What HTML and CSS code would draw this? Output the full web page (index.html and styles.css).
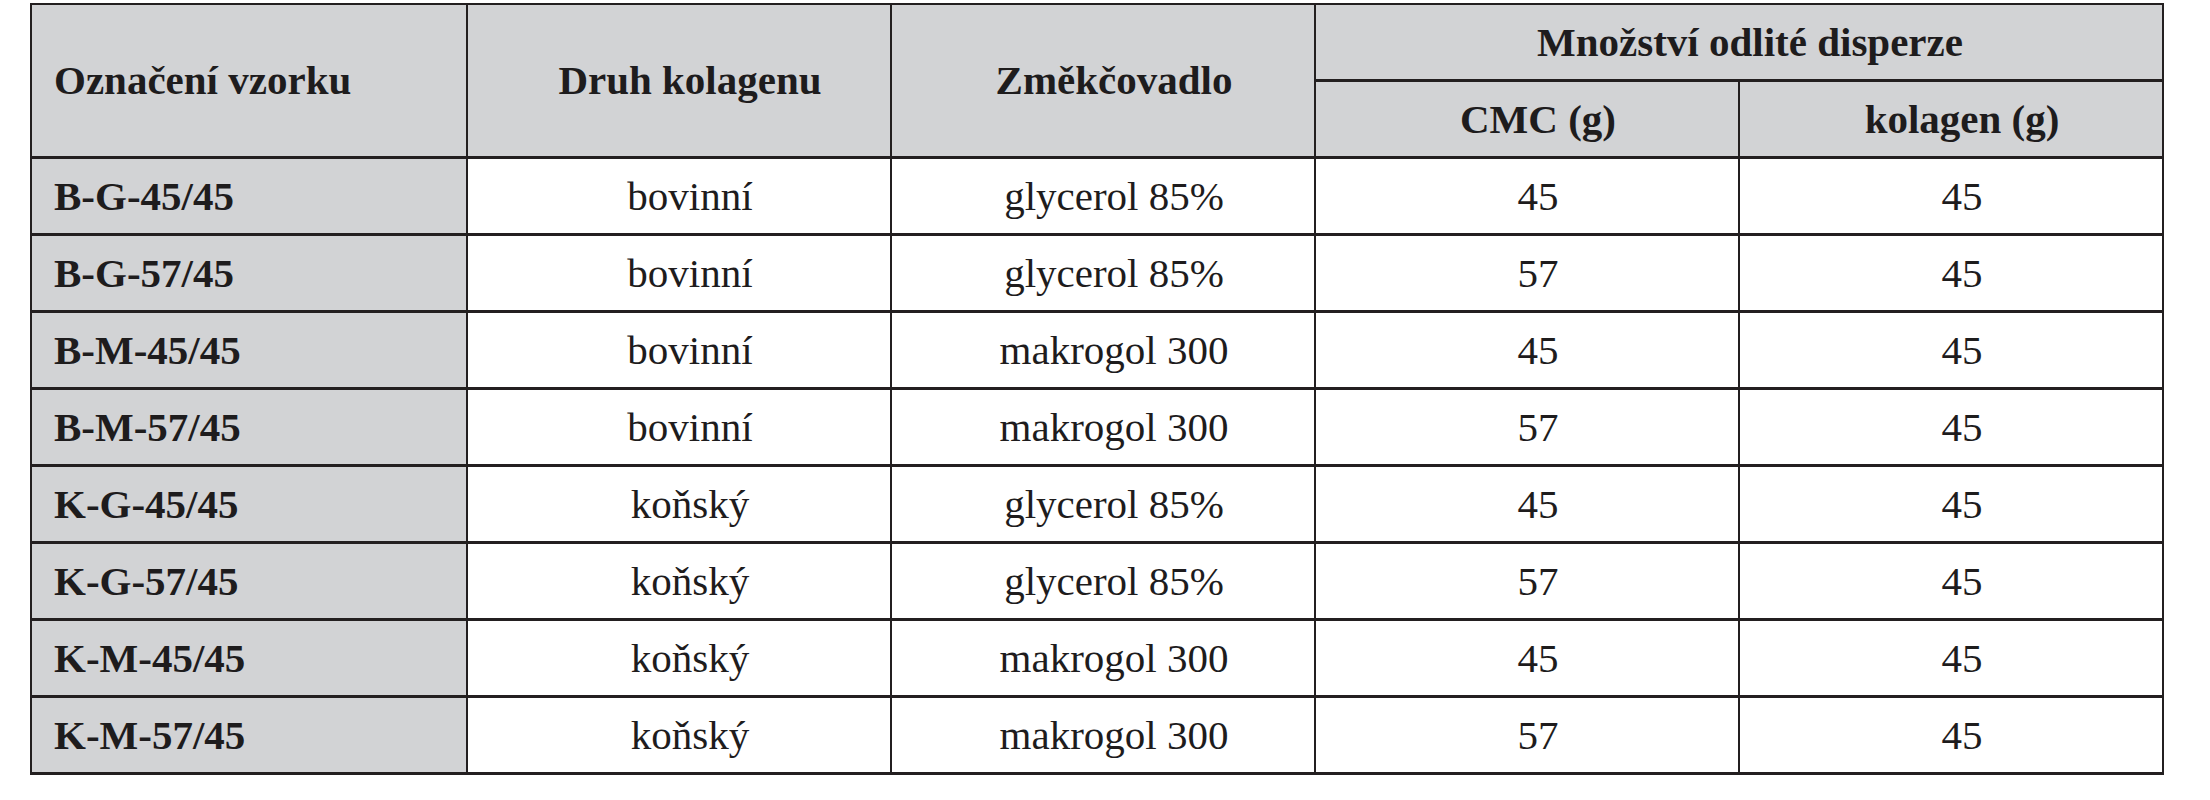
FILE: index.html
```html
<!DOCTYPE html>
<html lang="cs">
<head>
<meta charset="utf-8">
<title>Tabulka vzorků</title>
<link rel="stylesheet" href="styles.css">
</head>
<body>
<table class="data">
  <colgroup>
    <col class="c-first">
    <col class="c-col">
    <col class="c-col">
    <col class="c-col">
    <col class="c-col">
  </colgroup>
  <thead>
    <tr class="hrow">
      <th class="lead" rowspan="2">Označení vzorku</th>
      <th rowspan="2">Druh kolagenu</th>
      <th rowspan="2">Změkčovadlo</th>
      <th colspan="2" class="group">Množství odlité disperze</th>
    </tr>
    <tr class="hrow">
      <th>CMC (g)</th>
      <th>kolagen (g)</th>
    </tr>
  </thead>
  <tbody>
    <tr><th class="lead">B-G-45/45</th><td>bovinní</td><td>glycerol 85%</td><td>45</td><td>45</td></tr>
    <tr><th class="lead">B-G-57/45</th><td>bovinní</td><td>glycerol 85%</td><td>57</td><td>45</td></tr>
    <tr><th class="lead">B-M-45/45</th><td>bovinní</td><td>makrogol 300</td><td>45</td><td>45</td></tr>
    <tr><th class="lead">B-M-57/45</th><td>bovinní</td><td>makrogol 300</td><td>57</td><td>45</td></tr>
    <tr><th class="lead">K-G-45/45</th><td>koňský</td><td>glycerol 85%</td><td>45</td><td>45</td></tr>
    <tr><th class="lead">K-G-57/45</th><td>koňský</td><td>glycerol 85%</td><td>57</td><td>45</td></tr>
    <tr><th class="lead">K-M-45/45</th><td>koňský</td><td>makrogol 300</td><td>45</td><td>45</td></tr>
    <tr><th class="lead">K-M-57/45</th><td>koňský</td><td>makrogol 300</td><td>57</td><td>45</td></tr>
  </tbody>
</table>
</body>
</html>
```
FILE: styles.css
```css
html, body {
  margin: 0;
  padding: 0;
  background: #ffffff;
}

body {
  padding: 3px 0 0 30px;
  font-family: "Liberation Serif", "Times New Roman", serif;
  color: #1e1c1d;
}

.data {
  border-collapse: collapse;
  table-layout: fixed;
  width: 2133px;
  font-size: 41px;
  line-height: 1;
}

.c-first { width: 436px; }
.c-col { width: 424px; }

.data th,
.data td {
  border-left: 2px solid #231f20;
  border-right: 2px solid #231f20;
  border-top: 3px solid #231f20;
  border-bottom: 3px solid #231f20;
  padding: 0 0 0 22px;
  text-align: center;
  vertical-align: middle;
  height: 74px;
}

.data thead th {
  background: #d2d3d5;
  font-weight: bold;
}

.data thead .hrow:first-child th {
  border-top-width: 2px;
}

.data .group {
  border-bottom-width: 2px;
}

.data tbody th.lead,
.data thead th.lead {
  text-align: left;
  font-weight: bold;
  background: #d2d3d5;
}

.data td {
  font-weight: normal;
  background: #ffffff;
}
```
